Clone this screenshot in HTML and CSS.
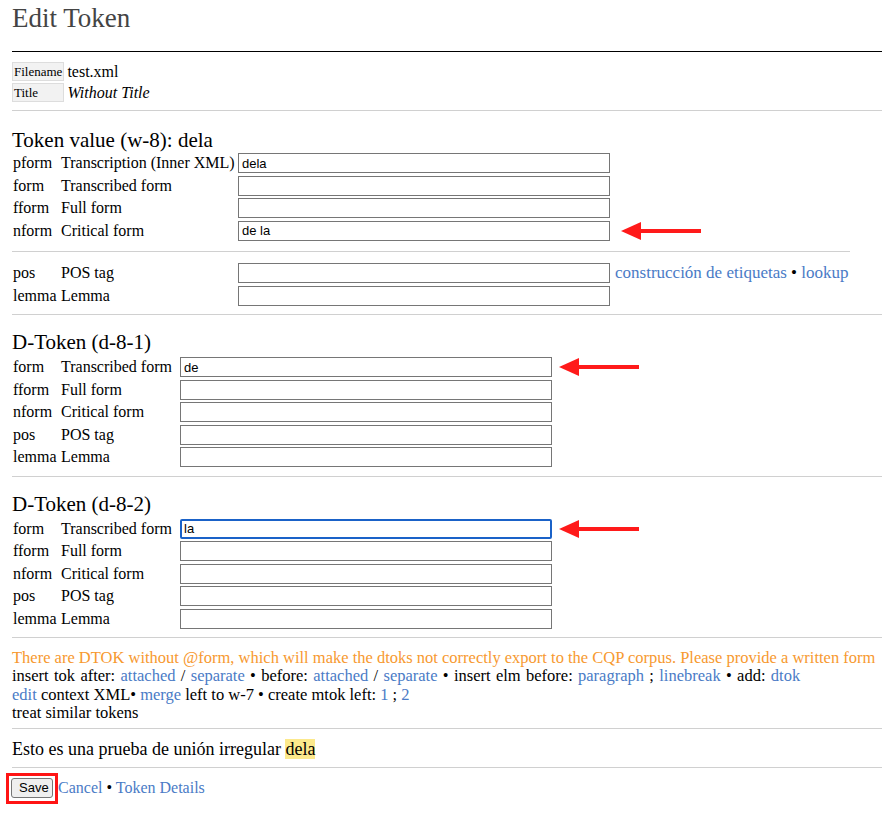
FILE: index.html
```html
<!DOCTYPE html>
<html lang="es">
<head>
<meta charset="utf-8">
<title>Edit Token</title>
<link rel="stylesheet" href="styles.css">
</head>
<body>
<h1 class="page-title">Edit Token</h1>
<hr class="rule-dark">
<table class="meta">
  <tr><th>Filename</th><td>test.xml</td></tr>
  <tr><th>Title</th><td><i>Without Title</i></td></tr>
</table>
<hr class="rule rule-meta">
<h2 class="sec-title sec-first">Token value (w-8): dela</h2>
<table class="fields fields-main">
  <tr><td class="code">pform</td><td class="lab">Transcription (Inner XML)</td><td class="inp"><input type="text" value="dela"></td><td class="extra"></td></tr>
  <tr><td class="code">form</td><td class="lab">Transcribed form</td><td class="inp"><input type="text"></td><td class="extra"></td></tr>
  <tr><td class="code">fform</td><td class="lab">Full form</td><td class="inp"><input type="text"></td><td class="extra"></td></tr>
  <tr><td class="code">nform</td><td class="lab">Critical form</td><td class="inp"><input type="text" value="de la"></td><td class="extra"><svg class="arrow arrow-far" width="80" height="20" viewBox="0 0 80 20"><line x1="18" y1="10" x2="80" y2="10" stroke="#ff1a1a" stroke-width="4"/><polygon points="0,10 20,1 20,19" fill="#ff1a1a"/></svg></td></tr>
  <tr class="sep"><td colspan="4"><div class="inner-rule"></div></td></tr>
  <tr><td class="code">pos</td><td class="lab">POS tag</td><td class="inp"><input type="text"></td><td class="extra links"><a href="#">construcción de etiquetas</a> • <a href="#">lookup</a></td></tr>
  <tr><td class="code">lemma</td><td class="lab">Lemma</td><td class="inp"><input type="text"></td><td class="extra"></td></tr>
</table>
<hr class="rule">
<h2 class="sec-title">D-Token (d-8-1)</h2>
<table class="fields fields-dtok">
  <tr><td class="code">form</td><td class="lab">Transcribed form</td><td class="inp"><input type="text" value="de"></td><td class="extra"><svg class="arrow" width="80" height="20" viewBox="0 0 80 20"><line x1="18" y1="10" x2="80" y2="10" stroke="#ff1a1a" stroke-width="4"/><polygon points="0,10 20,1 20,19" fill="#ff1a1a"/></svg></td></tr>
  <tr><td class="code">fform</td><td class="lab">Full form</td><td class="inp"><input type="text"></td><td class="extra"></td></tr>
  <tr><td class="code">nform</td><td class="lab">Critical form</td><td class="inp"><input type="text"></td><td class="extra"></td></tr>
  <tr><td class="code">pos</td><td class="lab">POS tag</td><td class="inp"><input type="text"></td><td class="extra"></td></tr>
  <tr><td class="code">lemma</td><td class="lab">Lemma</td><td class="inp"><input type="text"></td><td class="extra"></td></tr>
</table>
<hr class="rule">
<h2 class="sec-title">D-Token (d-8-2)</h2>
<table class="fields fields-dtok">
  <tr><td class="code">form</td><td class="lab">Transcribed form</td><td class="inp"><input type="text" value="la" class="focused"></td><td class="extra"><svg class="arrow" width="80" height="20" viewBox="0 0 80 20"><line x1="18" y1="10" x2="80" y2="10" stroke="#ff1a1a" stroke-width="4"/><polygon points="0,10 20,1 20,19" fill="#ff1a1a"/></svg></td></tr>
  <tr><td class="code">fform</td><td class="lab">Full form</td><td class="inp"><input type="text"></td><td class="extra"></td></tr>
  <tr><td class="code">nform</td><td class="lab">Critical form</td><td class="inp"><input type="text"></td><td class="extra"></td></tr>
  <tr><td class="code">pos</td><td class="lab">POS tag</td><td class="inp"><input type="text"></td><td class="extra"></td></tr>
  <tr><td class="code">lemma</td><td class="lab">Lemma</td><td class="inp"><input type="text"></td><td class="extra"></td></tr>
</table>
<hr class="rule">
<div class="actions">
  <div class="warning">There are DTOK without @form, which will make the dtoks not correctly export to the CQP corpus. Please provide a written form</div>
  <div class="wide">insert tok after: <a href="#">attached</a> / <a href="#">separate</a> • before: <a href="#">attached</a> / <a href="#">separate</a> • insert elm before: <a href="#">paragraph</a> ; <a href="#">linebreak</a> • add: <a href="#">dtok</a></div>
  <div><a href="#">edit</a> context XML• <a href="#">merge</a> left to w-7 • create mtok left: <a href="#">1</a> ; <a href="#">2</a></div>
  <div>treat similar tokens</div>
</div>
<hr class="rule rule-after-actions">
<div class="context">Esto es una prueba de unión irregular <span class="hl">dela</span></div>
<hr class="rule rule-after-context">
<div class="buttons"><span class="save-mark"><button type="button" class="save">Save</button></span><span class="btn-links"><a href="#">Cancel</a> • <a href="#">Token Details</a></span></div>
</body>
</html>
```

FILE: styles.css
```css
html, body {
  background: #fff;
}
body {
  margin: 0;
  padding: 0 0 0 12px;
  font-family: "Liberation Serif", "Times New Roman", serif;
  font-size: 16px;
  color: #000;
}
a {
  color: #4a7bc6;
  text-decoration: none;
}
.page-title {
  margin: 0;
  padding-top: 4px;
  font-size: 27px;
  line-height: 28px;
  font-weight: normal;
  color: #444;
}
.rule-dark {
  border: 0;
  border-top: 1px solid #000;
  margin: 19px 0 8px 0;
  height: 0;
}
.rule {
  border: 0;
  border-top: 1px solid #d0d0d0;
  margin: 7px 0 0 0;
  height: 0;
}
.rule-meta {
  margin-top: 6px;
}
.rule-after-actions {
  margin-top: 5px;
}
.rule-after-context {
  margin-top: 8px;
}
.meta {
  border-collapse: separate;
  border-spacing: 0 2px;
  margin: 0;
}
.meta th {
  background: #f2f2f2;
  border: 1px solid #ddd;
  font-weight: normal;
  font-size: 13px;
  text-align: left;
  padding: 0 1px 0 1px;
  height: 17px;
  line-height: 17px;
}
.meta td {
  padding: 0 0 0 3px;
  font-size: 16px;
  line-height: 17px;
}
.sec-title {
  margin: 16px 0 2px 0;
  font-size: 21px;
  line-height: 23px;
  font-weight: normal;
}
.sec-first {
  margin-top: 18px;
  margin-bottom: 0;
}
.fields {
  border-collapse: collapse;
  border-spacing: 0;
}
.fields td {
  padding: 1.25px 1px;
  white-space: nowrap;
  vertical-align: middle;
  line-height: 20px;
}
.fields td.code {
  width: 46px;
}
.fields-main td.lab {
  width: 175px;
}
.fields-dtok td.lab {
  width: 117px;
}
.fields td.extra {
  padding-left: 4px;
}
.fields td.links {
  font-size: 17px;
}
.fields input {
  display: block;
  box-sizing: border-box;
  width: 372px;
  height: 20px;
  margin: 0;
  padding: 1px 3px;
  border: 1px solid #767676;
  border-radius: 0;
  font-family: "Liberation Sans", Arial, sans-serif;
  font-size: 13px;
  color: #000;
  background: #fff;
}
.fields input.focused {
  border: 2px solid #1a62c8;
  border-radius: 2px;
  padding: 0 2px;
}
.arrow {
  display: block;
  margin-left: 2px;
}
.arrow-far {
  margin-left: 6px;
}
.sep td {
  padding: 9px 0 10px 0;
  line-height: 0;
}
.inner-rule {
  border-top: 1px solid #d0d0d0;
}
.actions {
  padding-top: 11px;
  line-height: 18.4px;
  font-size: 16.5px;
}
.actions .wide {
  word-spacing: 1.2px;
}
.warning {
  color: #f7992f;
  white-space: nowrap;
}
.context {
  margin-top: 10px;
  line-height: 20px;
  font-size: 18px;
}
.hl {
  background: #fce98c;
}
.buttons {
  margin-top: 5px;
  display: flex;
  align-items: center;
  line-height: 22px;
}
.save-mark {
  display: flex;
  border: 3px solid #ff1414;
  padding: 2px 2px 3px 2px;
  margin-left: -6px;
}
.save {
  font-family: "Liberation Sans", Arial, sans-serif;
  font-size: 13px;
  margin: 0;
  padding: 0 7px;
  width: 42px;
  height: 20px;
  background: #efefef;
  border: 1px solid #767676;
  border-radius: 3px;
  color: #000;
}
.btn-links {
  white-space: pre;
}
```
